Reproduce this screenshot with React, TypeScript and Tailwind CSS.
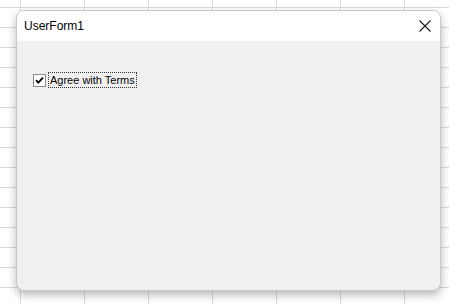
import React from "react";

export default function App() {
  return (
    <main className="h-[304px] w-[449px] overflow-hidden bg-white bg-[linear-gradient(to_right,#dadada_1px,transparent_1px),linear-gradient(to_bottom,#dadada_1px,transparent_1px)] bg-[size:64px_20px] bg-[position:20px_7px] pl-[16px] pt-[10px] font-['Liberation_Sans',Arial,sans-serif]">
      {/* UserForm window */}
      <div className="flex h-[281px] w-[425px] flex-col overflow-hidden rounded-[8px] border border-[#c8c8c8] bg-[#f0f0f0] shadow-[0_4px_10px_rgba(0,0,0,0.28)]">
        {/* Title bar */}
        <div className="flex h-[30px] shrink-0 items-center justify-between bg-white pl-[7px] pr-[9px]">
          <span className="text-[12px] text-black">UserForm1</span>
          <svg className="h-[12px] w-[12px]" viewBox="0 0 12 12" fill="none" stroke="#1a1a1a" strokeWidth={1.1}>
            <path d="M0.5 0.5l11 11M11.5 0.5l-11 11" />
          </svg>
        </div>

        {/* Form body */}
        <div className="flex-1 pl-[16px] pt-[31px]">
          <label className="flex items-center gap-[2px]">
            <span className="flex h-[13px] w-[13px] items-center justify-center border border-[#8f8f8f] bg-white">
              <svg className="h-[9px] w-[9px]" viewBox="0 0 9 9" fill="none" stroke="#000" strokeWidth={1.8}>
                <path d="M1 4.2l2.3 2.4L8 1.6" />
              </svg>
            </span>
            <span className="border border-dotted border-[#333] px-[1px] text-[11px] leading-[14px] text-black">
              Agree with Terms
            </span>
          </label>
        </div>
      </div>
    </main>
  );
}
